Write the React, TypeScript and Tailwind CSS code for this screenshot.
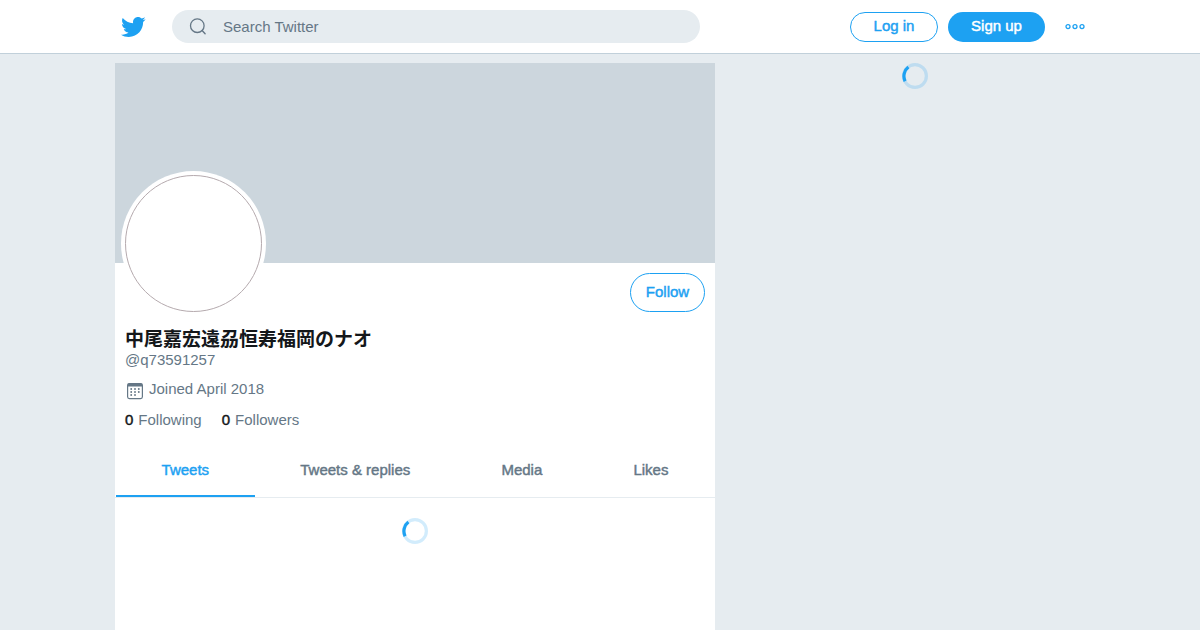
import React from "react";

const STRONG = "[-webkit-text-stroke:0.03em]";

function TwitterBird() {
  return (
    <svg viewBox="0 0 24 24" className="size-[26px] fill-[#1da1f2]" aria-hidden="true">
      <path d="M23.643 4.937c-.835.37-1.732.62-2.675.733.962-.576 1.7-1.49 2.048-2.578-.9.534-1.897.922-2.958 1.13-.85-.904-2.06-1.47-3.4-1.47-2.572 0-4.658 2.086-4.658 4.66 0 .364.042.718.12 1.06-3.873-.195-7.304-2.05-9.602-4.868-.4.69-.63 1.49-.63 2.342 0 1.616.823 3.043 2.072 3.878-.764-.025-1.482-.234-2.11-.583v.06c0 2.257 1.605 4.14 3.737 4.568-.392.106-.803.162-1.227.162-.3 0-.593-.028-.877-.082.593 1.85 2.313 3.198 4.352 3.234-1.595 1.25-3.604 1.995-5.786 1.995-.376 0-.747-.022-1.112-.065 2.062 1.323 4.51 2.093 7.14 2.093 8.57 0 13.255-7.098 13.255-13.254 0-.2-.005-.402-.014-.602.91-.658 1.7-1.477 2.323-2.41z" />
    </svg>
  );
}

function SearchIcon() {
  return (
    <svg viewBox="0 0 18 18" className="size-[18px] shrink-0 fill-none stroke-[#657786]" aria-hidden="true">
      <circle cx="8.3" cy="7.7" r="6.8" strokeWidth="1.3" />
      <path d="M13.1 12.6l3 3.2" strokeWidth="1.4" strokeLinecap="round" />
    </svg>
  );
}

function MoreIcon() {
  return (
    <svg viewBox="0 0 20 8" className="h-2 w-5 fill-none stroke-[#1da1f2]" aria-hidden="true">
      {[3, 10, 17].map((cx) => (
        <circle key={cx} cx={cx} cy="3.6" r="2" strokeWidth="1.3" />
      ))}
    </svg>
  );
}

function CalendarIcon() {
  return (
    <svg viewBox="0 0 18 18" className="size-[18px] fill-[#657786]" aria-hidden="true">
      <rect x="1.6" y="1.6" width="14.8" height="15" rx="1.8" fill="none" stroke="#657786" strokeWidth="1.2" />
      <path d="M1.6 2.8a1.6 1.6 0 0 1 1.6-1.6h11.6a1.6 1.6 0 0 1 1.6 1.6v1.8H1.6z" />
      {[7, 10, 13].map((cy) =>
        [5.2, 9, 12.8].map((cx) =>
          cy === 13 && cx > 12 ? null : <circle key={`${cx}-${cy}`} cx={cx} cy={cy} r="0.95" />
        )
      )}
    </svg>
  );
}

function Spinner() {
  return (
    <svg viewBox="0 0 26 26" className="size-[26px] fill-none stroke-[#1da1f2]" role="status" aria-label="Loading">
      <circle cx="13" cy="13" r="11.4" strokeWidth="3.2" opacity="0.2" />
      <path d="M3.1 18.2A11.4 11.4 0 0 1 6.4 4.1" strokeWidth="3.2" />
    </svg>
  );
}

function Header() {
  return (
    <header className="border-b border-[#c1d0da] bg-white">
      <div className="mx-auto flex h-[53px] max-w-[970px] items-center">
        <a href="#home" aria-label="Twitter" className="ml-[5px]">
          <TwitterBird />
        </a>
        <form className="ml-[26px] flex h-[33px] max-w-[528px] flex-1 items-center rounded-full bg-[#e6ecf0] px-[17px]">
          <SearchIcon />
          <input
            type="search"
            aria-label="Search Twitter"
            placeholder="Search Twitter"
            className="ml-4 min-w-0 flex-1 bg-transparent text-[#657786] outline-none placeholder:text-[#657786]"
          />
        </form>
        <div className="ml-auto flex shrink-0 items-center gap-[10px]">
          <a
            href="#login"
            className={`flex h-[30px] w-[88px] items-center justify-center rounded-full border border-[#1da1f2] pb-px text-[#1da1f2] ${STRONG}`}
          >
            Log in
          </a>
          <a
            href="#signup"
            className={`flex h-[30px] w-[97px] items-center justify-center rounded-full bg-[#1da1f2] pb-px text-white ${STRONG}`}
          >
            Sign up
          </a>
          <button type="button" aria-label="More" className="ml-[10px]">
            <MoreIcon />
          </button>
        </div>
      </div>
    </header>
  );
}

const tabs = ["Tweets", "Tweets & replies", "Media", "Likes"];

function Profile() {
  return (
    <main className="w-full max-w-[600px] bg-white">
      <div className="h-[200px] bg-[#ccd6dd]" />
      <div className="px-[10px]">
        <div className="flex items-start justify-between">
          <div className="-mt-[92px] -ml-1 size-[145px] rounded-full bg-white p-1">
            <div className="size-full rounded-full border border-[#b5aaae] bg-white" />
          </div>
          <button
            type="button"
            className={`mt-[10px] h-[39px] w-[75px] rounded-full border border-[#1da1f2] pb-px text-[#1da1f2] ${STRONG}`}
          >
            Follow
          </button>
        </div>
        <h1 className="mt-[13px] text-[19px] leading-[22px] font-bold text-[#14171a]">中尾嘉宏遠刕恒寿福岡のナオ</h1>
        <p className="-mt-px">@q73591257</p>
        <p className="mt-[9px] flex gap-[5px]">
          <span className="mt-[3px] ml-px">
            <CalendarIcon />
          </span>
          Joined April 2018
        </p>
        <div className="mt-[10px] flex gap-5">
          <a href="#following" className="flex gap-[5px]">
            <span className={`text-[#14171a] ${STRONG}`}>0</span>
            <span>Following</span>
          </a>
          <a href="#followers" className="flex gap-[5px]">
            <span className={`text-[#14171a] ${STRONG}`}>0</span>
            <span>Followers</span>
          </a>
        </div>
      </div>
      <nav className="mt-[13px] flex border-b border-[#e6ecf0] px-px">
        {tabs.map((label, i) => (
          <a
            key={label}
            href="#tab"
            aria-current={i === 0 ? "page" : undefined}
            className={`flex h-[54px] flex-auto items-center justify-center border-b-2 pt-[2px] whitespace-nowrap ${STRONG} ${
              i === 0 ? "border-[#1da1f2] text-[#1da1f2]" : "border-transparent"
            }`}
          >
            {label}
          </a>
        ))}
      </nav>
      <div className="flex justify-center py-5">
        <Spinner />
      </div>
    </main>
  );
}

export default function App() {
  return (
    <div className="flex min-h-screen flex-col bg-[#e6ecf0] font-['Liberation_Sans','Noto_Sans_CJK_JP',sans-serif] text-[15px] leading-5 text-[#657786]">
      <Header />
      <div className="mx-auto flex w-full max-w-[970px] flex-1 pt-[9px]">
        <Profile />
        <aside className="ml-[30px] flex flex-1 justify-center">
          <Spinner />
        </aside>
      </div>
    </div>
  );
}
